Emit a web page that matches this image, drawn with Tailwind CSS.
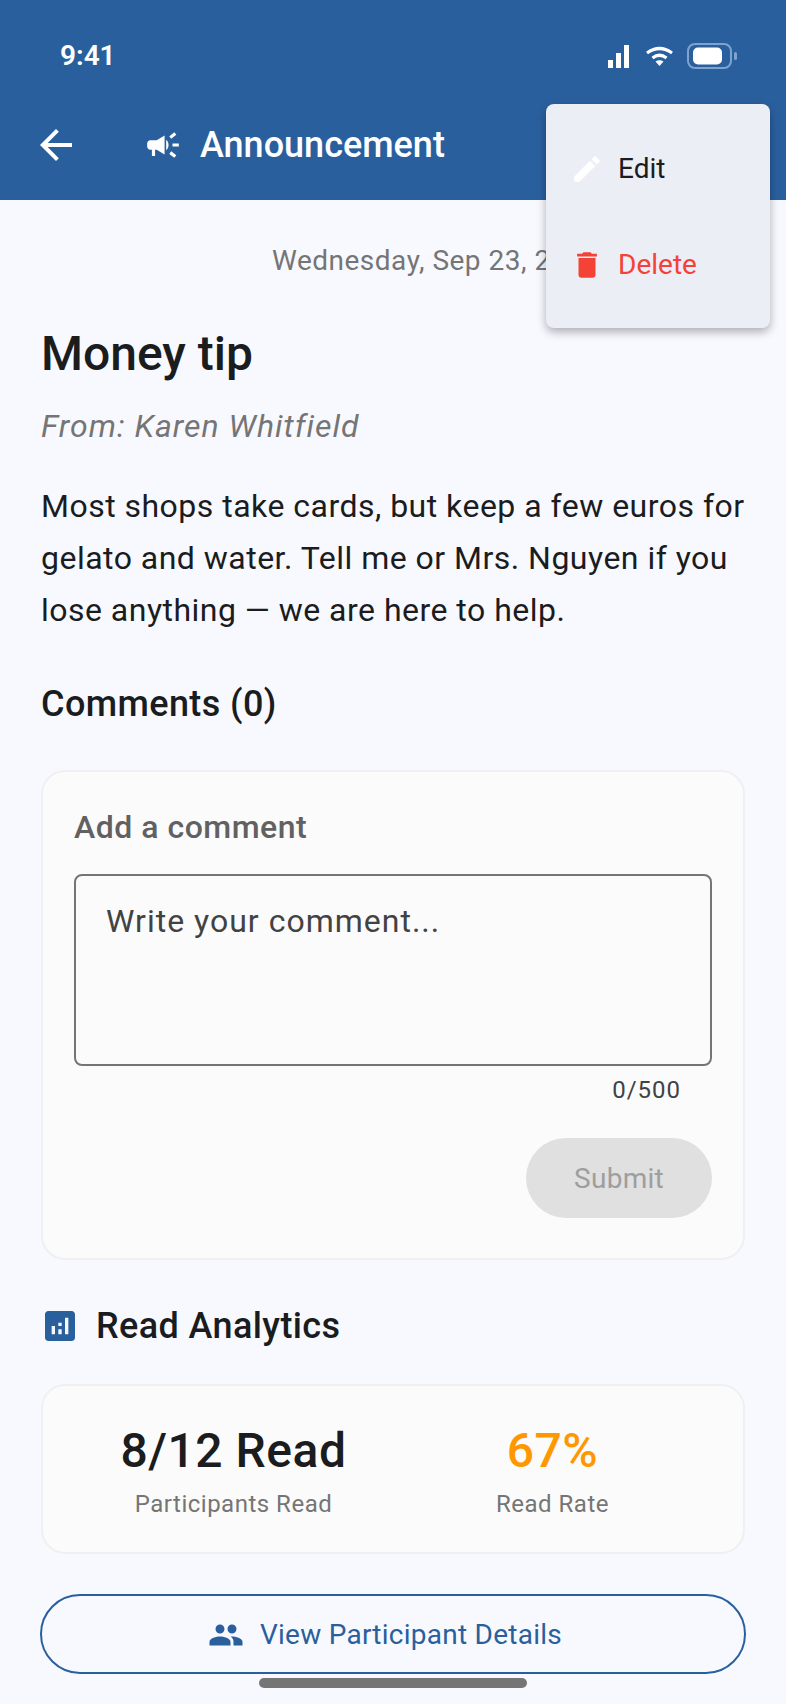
<!DOCTYPE html>
<html lang="en">
<head>
  <meta charset="UTF-8" />
  <meta name="viewport" content="width=device-width, initial-scale=1.0" />
  <title>Announcement</title>
  <script src="https://cdn.jsdelivr.net/npm/@tailwindcss/browser@4"></script>
</head>
<body class="bg-[#f8f9ff] font-['Roboto',sans-serif]">
  <div class="relative w-[786px] h-[1704px] overflow-hidden bg-[#f8f9ff]">
    <!-- Header -->
    <header class="bg-[#2a5f9e] h-[200px] text-white">
      <div class="h-[112px] flex items-center justify-between pl-[60px] pr-[49px]">
        <span class="text-[28px] font-semibold leading-none">9:41</span>
        <div class="flex items-center">
          <svg class="w-[21px] h-[23px]" viewBox="0 0 21 23" fill="#fff"><rect x="0" y="15" width="5" height="8"/><rect x="8" y="8" width="5" height="15"/><rect x="16" y="0" width="5" height="23"/></svg>
          <svg class="ml-[16px] w-[29px] h-[20px]" viewBox="0 0 29 20" fill="none" stroke="#fff" stroke-width="3.2"><path d="M2 7 Q14.5 -2 27 7"/><path d="M7.5 12 Q14.5 6.5 21.5 12"/><path d="M10.5 15.5 L14.5 20 L18.5 15.5 Q14.5 13 10.5 15.5Z" fill="#fff" stroke="none"/></svg>
          <svg class="ml-[13px] w-[50px] h-[26px]" viewBox="0 0 50 26" fill="none"><rect x="1" y="1" width="43" height="24" rx="7" stroke="#7fa3cf" stroke-width="2"/><rect x="6" y="4.5" width="29" height="17" rx="5" fill="#fff"/><rect x="47" y="9" width="3" height="8" rx="1.5" fill="#7fa3cf"/></svg>
        </div>
      </div>
      <div class="h-[66px] flex items-center pl-[32px]">
        <svg class="w-[48px] h-[48px]" viewBox="0 0 24 24" fill="#fff"><path d="M20 11H7.83l5.59-5.59L12 4l-8 8 8 8 1.41-1.41L7.83 13H20v-2z"/></svg>
        <svg class="w-[38px] h-[38px] ml-[64px]" viewBox="0 0 24 24" fill="#fff"><path d="M18 11v2h4v-2h-4zm-2 6.61c.96.71 2.21 1.65 3.2 2.39.4-.53.8-1.07 1.2-1.6-.99-.74-2.24-1.68-3.2-2.4-.4.54-.8 1.08-1.2 1.61zM20.4 5.6c-.4-.53-.8-1.07-1.2-1.6-.99.74-2.24 1.68-3.2 2.4.4.53.8 1.07 1.2 1.6.96-.72 2.21-1.65 3.2-2.4zM4 9c-1.1 0-2 .9-2 2v2c0 1.1.9 2 2 2h1v4h2v-4h1l5 3V6L8 9H4zm11.5 3c0-1.33-.58-2.53-1.5-3.35v6.69c.92-.81 1.5-2.01 1.5-3.34z"/></svg>
        <h1 class="ml-[18px] text-[36px] font-medium leading-none">Announcement</h1>
      </div>
    </header>

    <!-- Body -->
    <main class="px-[41px]">
      <p class="mt-[43px] pl-[231px] text-[28px] leading-[36px] text-[#757575] tracking-[0.5px] whitespace-nowrap">Wednesday, Sep 23, 2026</p>
      <h2 class="mt-[45px] text-[48px] leading-[60px] font-medium text-[#1a1c1e]">Money tip</h2>
      <p class="mt-[22px] text-[32px] leading-[40px] italic text-[#757575] tracking-[1px]">From: Karen Whitfield</p>
      <p class="mt-[34px] text-[32px] leading-[52px] text-[#1a1c1e] tracking-[0.48px]">Most shops take cards, but keep a few euros for gelato and water. Tell me or Mrs. Nguyen if you lose anything — we are here to help.</p>
      <h3 class="mt-[44px] text-[36px] leading-[48px] font-medium text-[#1a1c1e] tracking-[0.4px]">Comments (0)</h3>

      <section class="mt-[42px] h-[490px] rounded-[24px] border-2 border-[#f0f0f2] bg-[#fbfbfb] px-[31px]">
        <h4 class="mt-[35px] text-[32px] leading-[40px] font-medium text-[#616161] tracking-[0.5px]">Add a comment</h4>
        <div class="mt-[27px] h-[192px] rounded-[8px] border-2 border-[#757575] px-[30px] pt-[25px] text-[32px] leading-[40px] text-[#424242] tracking-[1px]">Write your comment...</div>
        <p class="mt-[8px] pr-[31px] text-right text-[24px] leading-[32px] text-[#424242] tracking-[1px]">0/500</p>
        <div class="mt-[32px] flex justify-end">
          <button class="w-[186px] h-[80px] pt-[2px] rounded-full bg-[#e0e0e0] text-[28px] text-[#9e9e9e] tracking-[0.25px]">Submit</button>
        </div>
      </section>

      <div class="mt-[44px] flex items-center h-[44px]">
        <svg class="w-[40px] h-[40px] -ml-[1px]" viewBox="0 0 24 24" fill="#2a5f9e"><path d="M19 3H5c-1.1 0-2 .9-2 2v14c0 1.1.9 2 2 2h14c1.1 0 2-.9 2-2V5c0-1.1-.9-2-2-2zM9 17H7v-5h2v5zm4 0h-2v-3h2v3zm0-5h-2v-2h2v2zm4 5h-2V7h2v10z"/></svg>
        <h3 class="ml-[16px] text-[36px] leading-[44px] font-medium text-[#1a1c1e] tracking-[0.4px]">Read Analytics</h3>
      </div>

      <section class="mt-[36px] h-[170px] rounded-[24px] border-2 border-[#f0f0f2] bg-[#fbfbfb] grid grid-cols-2 px-[31px]">
        <div class="flex flex-col items-center pt-[37px]">
          <span class="text-[48px] leading-[56px] font-medium text-[#1a1c1e] tracking-[0.5px]">8/12 Read</span>
          <span class="mt-[9px] text-[24px] leading-[32px] text-[#757575] tracking-[0.5px]">Participants Read</span>
        </div>
        <div class="flex flex-col items-center pt-[37px]">
          <span class="text-[48px] leading-[56px] font-medium text-[#ff9800] tracking-[0.5px]">67%</span>
          <span class="mt-[9px] text-[24px] leading-[32px] text-[#757575] tracking-[0.5px]">Read Rate</span>
        </div>
      </section>

      <button class="mt-[40px] -mx-px w-[706px] h-[80px] pt-[1px] pr-[16px] rounded-full border-2 border-[#2a5f9e] flex items-center justify-center gap-[16px] text-[28px] text-[#2a5f9e] tracking-[0.25px]">
        <svg class="w-[36px] h-[36px]" viewBox="0 0 24 24" fill="#2a5f9e"><path d="M16 11c1.66 0 2.99-1.34 2.99-3S17.66 5 16 5c-1.66 0-3 1.34-3 3s1.34 3 3 3zm-8 0c1.66 0 2.99-1.34 2.99-3S9.66 5 8 5C6.34 5 5 6.34 5 8s1.34 3 3 3zm0 2c-2.33 0-7 1.17-7 3.5V19h14v-2.5c0-2.33-4.67-3.5-7-3.5zm8 0c-.29 0-.62.02-.97.05 1.16.84 1.97 1.97 1.97 3.45V19h6v-2.5c0-2.33-4.67-3.5-7-3.5z"/></svg>
        View Participant Details
      </button>
    </main>

    <!-- Overflow menu, sits over header and date -->
    <div class="absolute left-[546px] top-[104px] w-[224px] h-[224px] rounded-[8px] bg-[#eceef6] shadow-[0_4px_10px_rgba(0,0,0,0.3)] flex flex-col justify-center gap-[48px] pl-[24px]">
      <div class="flex items-center h-[48px] translate-y-[1px]">
        <svg class="w-[34px] h-[34px]" viewBox="0 0 24 24" fill="#fff"><path d="M3 17.25V21h3.75L17.81 9.94l-3.75-3.75L3 17.25zM20.71 7.04c.39-.39.39-1.02 0-1.41l-2.34-2.34c-.39-.39-1.02-.39-1.41 0l-1.83 1.83 3.75 3.75 1.83-1.83z"/></svg>
        <span class="ml-[14px] text-[28px] text-[#1a1c1e]">Edit</span>
      </div>
      <div class="flex items-center h-[48px] translate-y-[1px]">
        <svg class="w-[34px] h-[34px]" viewBox="0 0 24 24" fill="#f44336"><path d="M6 19c0 1.1.9 2 2 2h8c1.1 0 2-.9 2-2V7H6v12zM19 4h-3.5l-1-1h-5l-1 1H5v2h14V4z"/></svg>
        <span class="ml-[14px] text-[28px] text-[#f44336]">Delete</span>
      </div>
    </div>

    <!-- Home indicator -->
    <div class="absolute left-[259px] top-[1678px] w-[268px] h-[10px] rounded-full bg-[#757575]"></div>
  </div>
</body>
</html>
